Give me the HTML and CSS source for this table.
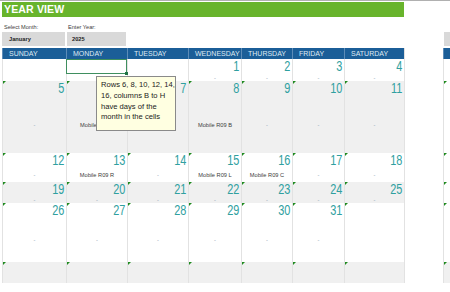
FILE: index.html
```html
<!DOCTYPE html>
<html>
<head>
<meta charset="utf-8">
<link rel="stylesheet" href="styles.css">
</head>
<body>
<div class="sheet">
  <div class="topline"></div>
  <div class="banner">YEAR VIEW</div>
  <div class="cal">
    <div class="inp"><div class="lbl">Select Month:</div><div class="box box-m">January</div></div>
    <div class="inp"><div class="lbl">Enter Year:</div><div class="box box-y">2025</div></div>
    <div class="inp span5"></div>
    <div class="inp"><div class="lbl"></div><div class="box box-x"></div></div>

    <div class="hd">SUNDAY</div><div class="hd">MONDAY</div><div class="hd">TUESDAY</div><div class="hd">WEDNESDAY</div><div class="hd">THURSDAY</div><div class="hd">FRIDAY</div><div class="hd">SATURDAY</div><div class="hd gap"></div><div class="hd">&nbsp;</div>

    <!-- week 1 -->
    <div class="c w"><div class="num"></div><div class="txt"></div></div>
    <div class="c w sel"><div class="num"></div><div class="txt"></div><i class="handle"></i></div>
    <div class="c w"><div class="num"></div><div class="txt"></div></div>
    <div class="c w"><div class="num">1</div><div class="txt dash">-</div></div>
    <div class="c w"><div class="num">2</div><div class="txt dash">-</div></div>
    <div class="c w"><div class="num">3</div><div class="txt dash">-</div></div>
    <div class="c w"><div class="num">4</div><div class="txt dash">-</div></div>
    <div class="c gap"></div>
    <div class="c x"></div>

    <!-- week 2 -->
    <div class="c g m"><div class="num">5</div><div class="txt dash">-</div></div>
    <div class="c g m"><div class="num">6</div><div class="txt">Mobile R09 A</div></div>
    <div class="c g m"><div class="num">7</div><div class="txt dash">-</div></div>
    <div class="c g m"><div class="num">8</div><div class="txt">Mobile R09 B</div></div>
    <div class="c g m"><div class="num">9</div><div class="txt dash">-</div></div>
    <div class="c g m"><div class="num">10</div><div class="txt dash">-</div></div>
    <div class="c g m"><div class="num">11</div><div class="txt dash">-</div></div>
    <div class="c gap"></div>
    <div class="c x m"></div>

    <!-- week 3 -->
    <div class="c w m"><div class="num">12</div><div class="txt dash">-</div></div>
    <div class="c w m"><div class="num">13</div><div class="txt">Mobile R09 R</div></div>
    <div class="c w m"><div class="num">14</div><div class="txt dash">-</div></div>
    <div class="c w m"><div class="num">15</div><div class="txt">Mobile R09 L</div></div>
    <div class="c w m"><div class="num">16</div><div class="txt">Mobile R09 C</div></div>
    <div class="c w m"><div class="num">17</div><div class="txt dash">-</div></div>
    <div class="c w m"><div class="num">18</div><div class="txt dash">-</div></div>
    <div class="c gap"></div>
    <div class="c x m"></div>

    <!-- week 4 -->
    <div class="c g m"><div class="num">19</div><div class="txt dash">-</div></div>
    <div class="c g m"><div class="num">20</div><div class="txt dash">-</div></div>
    <div class="c g m"><div class="num">21</div><div class="txt dash">-</div></div>
    <div class="c g m"><div class="num">22</div><div class="txt dash">-</div></div>
    <div class="c g m"><div class="num">23</div><div class="txt dash">-</div></div>
    <div class="c g m"><div class="num">24</div><div class="txt dash">-</div></div>
    <div class="c g m"><div class="num">25</div><div class="txt dash">-</div></div>
    <div class="c gap"></div>
    <div class="c x m"></div>

    <!-- week 5 -->
    <div class="c w m"><div class="num">26</div><div class="txt dash">-</div></div>
    <div class="c w m"><div class="num">27</div><div class="txt dash">-</div></div>
    <div class="c w m"><div class="num">28</div><div class="txt dash">-</div></div>
    <div class="c w m"><div class="num">29</div><div class="txt dash">-</div></div>
    <div class="c w m"><div class="num">30</div><div class="txt dash">-</div></div>
    <div class="c w m"><div class="num">31</div><div class="txt dash">-</div></div>
    <div class="c w m"><div class="num"></div><div class="txt"></div></div>
    <div class="c gap"></div>
    <div class="c x m"></div>

    <!-- week 6 -->
    <div class="c g m"></div>
    <div class="c g m"></div>
    <div class="c g m"></div>
    <div class="c g m"></div>
    <div class="c g m"></div>
    <div class="c g m"></div>
    <div class="c g m"></div>
    <div class="c gap"></div>
    <div class="c x g m"></div>
  </div>

  <div class="note">Rows 6, 8, 10, 12, 14,<br>16, columns B to H<br>have days of the<br>month in the cells</div>
</div>
</body>
</html>
```

FILE: styles.css
```css
html, body {
  margin: 0;
  padding: 0;
  background: #ffffff;
}

body {
  font-family: "Liberation Sans", Arial, sans-serif;
  width: 450px;
  height: 292px;
  overflow: hidden;
}

.sheet {
  position: relative;
  width: 450px;
  height: 292px;
}

.topline {
  height: 1px;
  background: #b0b0b0;
}

.banner {
  margin: 1px 0 0 2px;
  width: 400px;
  height: 15px;
  padding-left: 2px;
  background: #68b42c;
  color: #ffffff;
  font-weight: bold;
  font-size: 10.6px;
  line-height: 15px;
  letter-spacing: 0.1px;
}

.cal {
  display: grid;
  margin: 6px 0 0 2px;
  grid-template-columns: 64px 61px 61px 53px 51px 52px 60px 39px 1fr;
  grid-template-rows: auto 11px 22px 72px 29px 21px 59px 21px;
}

.inp {
  display: flex;
  flex-direction: column;
  padding-bottom: 2px;
}

.span5 {
  grid-column: span 6;
}

.lbl {
  height: 9px;
  font-size: 5.6px;
  line-height: 9px;
  color: #404040;
  padding-left: 2px;
}

.box {
  height: 14px;
  background: #d9d9d9;
  font-size: 5.7px;
  font-weight: bold;
  line-height: 14px;
  color: #222222;
}

.box-m {
  margin-right: 1px;
  padding-left: 7px;
}

.box-y {
  margin: 0 1px;
  padding-left: 5px;
}

.box-x {
  margin-left: 1px;
}

.hd {
  background: #1b5e98;
  color: #dfe9f3;
  font-size: 7px;
  line-height: 11px;
  padding-left: 6px;
  white-space: nowrap;
  overflow: hidden;
  border-left: 1px solid #5d8cb8;
}

.hd:first-of-type {
  border-left: none;
}

.hd.gap {
  background: #ffffff;
  border-left: 1px solid #e0e0e0;
}

.c {
  position: relative;
  display: flex;
  flex-direction: column;
  border-left: 1px solid #e2e2e2;
  min-width: 0;
}

.c.w {
  background: #ffffff;
}

.c.g {
  background: #f0f0f0;
}

.c.gap {
  background: #ffffff;
}

.c.x {
  background: #ffffff;
}

.c.x.g {
  background: #f0f0f0;
}

.c.m::before {
  content: "";
  position: absolute;
  top: 0;
  left: 0;
  border-top: 3px solid #1f8a1f;
  border-right: 3px solid transparent;
}

.num {
  height: 15px;
  flex: none;
  font-size: 14px;
  line-height: 15px;
  text-align: right;
  padding-right: 2px;
  color: #2fa0a0;
  transform: scaleX(0.78);
  transform-origin: right center;
}

.txt {
  flex: 1;
  display: flex;
  align-items: center;
  justify-content: center;
  font-size: 5.7px;
  color: #404040;
  white-space: nowrap;
}

.txt.dash {
  color: #8a9bb0;
}

.sel::after {
  content: "";
  position: absolute;
  left: -1px;
  top: 0;
  width: 61px;
  height: 15px;
  box-sizing: border-box;
  border: 1px solid #3f8f5f;
}

.handle {
  position: absolute;
  left: 58px;
  top: 13px;
  width: 3px;
  height: 3px;
  background: #217346;
  z-index: 1;
}

.note {
  position: absolute;
  left: 96px;
  top: 76px;
  width: 80px;
  height: 55px;
  box-sizing: border-box;
  padding: 3px 0 0 4px;
  background: #ffffe1;
  border: 1px solid #8a8a8a;
  font-size: 7.6px;
  line-height: 10.8px;
  color: #222222;
  white-space: nowrap;
}
```
